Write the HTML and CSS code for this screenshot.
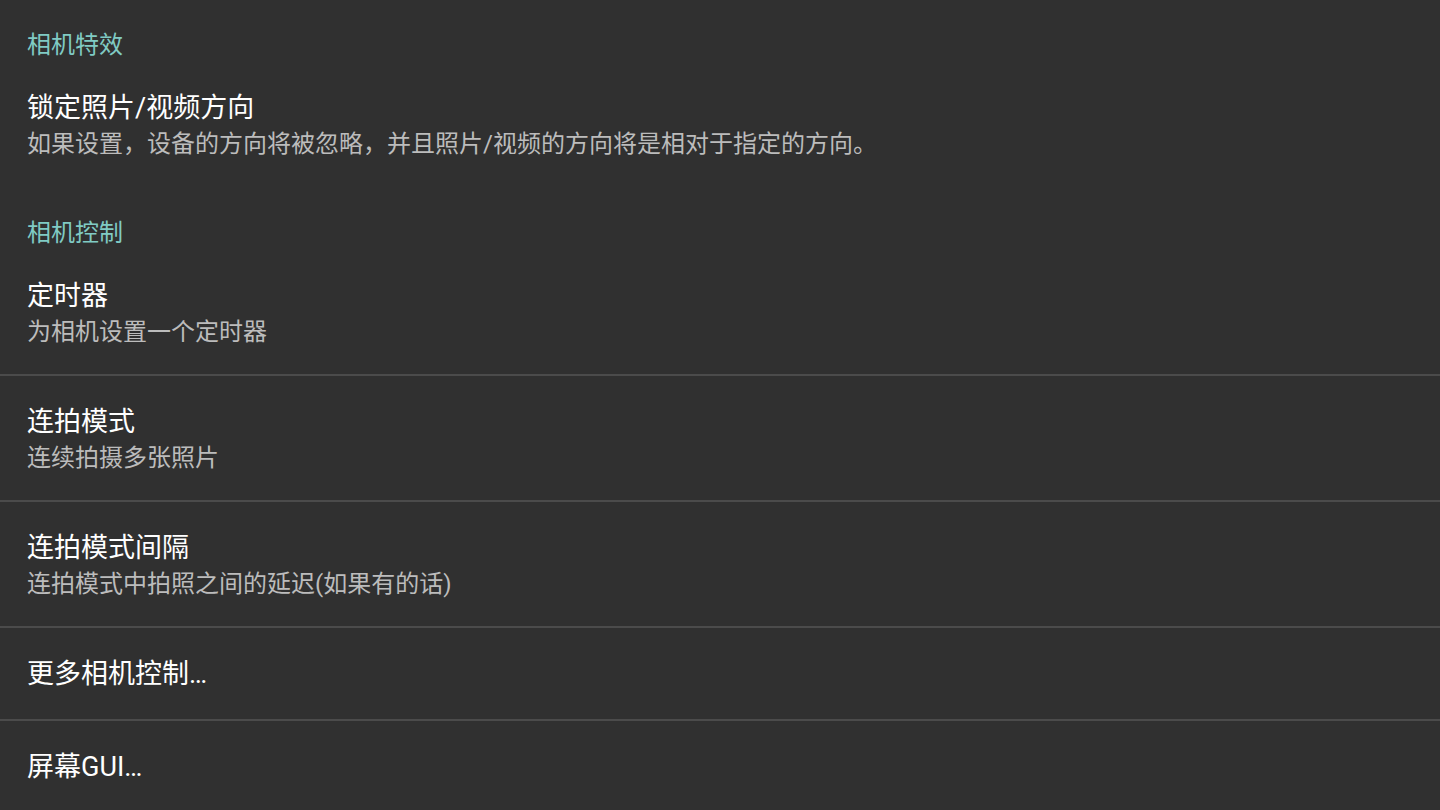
FILE: index.html
```
<!DOCTYPE html>
<html lang="zh-CN">
<head>
    <meta charset="UTF-8">
    <meta name="viewport" content="width=device-width, initial-scale=1.0">
    <title>设置</title>
    <link rel="stylesheet" href="styles.css">
</head>
<body>

<div class="prefs">
    <div class="category">相机特效</div>
    <div class="pref">
        <div class="title">锁定照片/视频方向</div>
        <div class="summary">如果设置，设备的方向将被忽略，并且照片/视频的方向将是相对于指定的方向。</div>
    </div>

    <div class="category">相机控制</div>
    <div class="pref">
        <div class="title">定时器</div>
        <div class="summary">为相机设置一个定时器</div>
    </div>
    <div class="pref divided">
        <div class="title">连拍模式</div>
        <div class="summary">连续拍摄多张照片</div>
    </div>
    <div class="pref divided">
        <div class="title">连拍模式间隔</div>
        <div class="summary">连拍模式中拍照之间的延迟(如果有的话)</div>
    </div>
    <div class="pref single divided">
        <div class="title">更多相机控制…</div>
    </div>
    <div class="pref single divided">
        <div class="title">屏幕GUI…</div>
    </div>
</div>

</body>
</html>
```

FILE: styles.css
```
body {
    margin: 0;
    background-color: #303030;
    font-family: Roboto, "Noto Sans CJK SC", sans-serif;
    color: #ffffff;
}
.prefs {
    display: flex;
    flex-direction: column;
}
.category {
    padding: 27px 27px 0;
    font-size: 24px;
    line-height: 36px;
    color: #80cbc4;
}
.pref + .category {
    padding-top: 29px;
}
.pref {
    padding: 27px 27px 24px;
}
.pref.divided {
    padding-top: 28px;
    border-top: 2px solid #4b4b4b;
}
.pref.single {
    padding-top: 28px;
    padding-bottom: 27px;
}
.title {
    font-size: 27px;
    line-height: 36px;
    color: #ffffff;
}
.summary {
    font-size: 24px;
    line-height: 36px;
    color: #bcbcbc;
}
```
